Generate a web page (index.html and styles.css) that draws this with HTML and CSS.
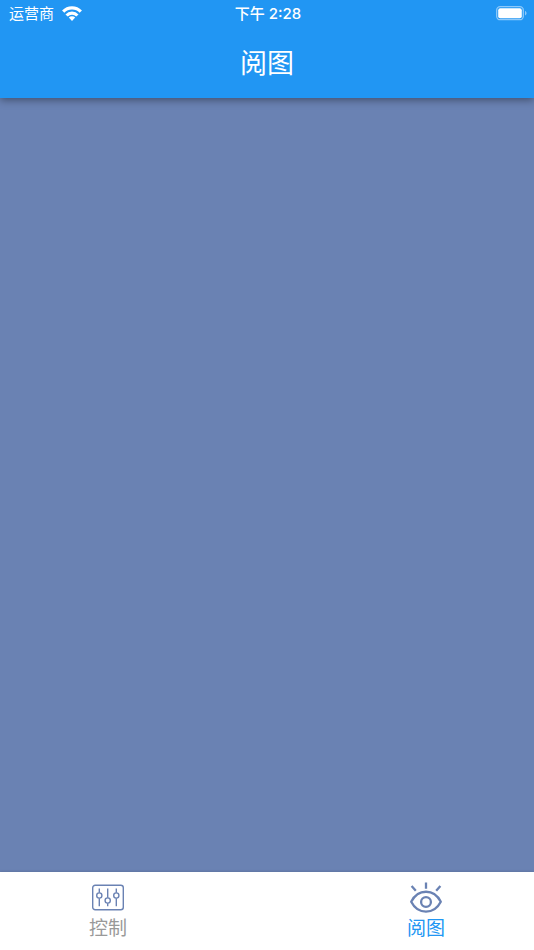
FILE: index.html
```html
<!DOCTYPE html>
<html lang="zh">
	<head>
		<meta charset="utf-8">
		<meta name="viewport" content="width=device-width, initial-scale=1">
		<title>阅图</title>
		<link rel="stylesheet" href="styles.css">
	</head>
	<body>
		<header class="header">
			<div class="status">
				<div class="carrier">
					<span>运营商</span>
					<svg class="wifi" width="20" height="18" viewBox="0 0 20 18" fill="none" stroke="#fff" stroke-width="3.2">
						<path d="M1.2 6.6A12.2 12.2 0 0 1 18.8 6.6"/>
						<path d="M4.6 10.5A7.4 7.4 0 0 1 15.4 10.5"/>
						<path d="M10 16L6.8 12.6A4.6 4.6 0 0 1 13.2 12.6Z" fill="#fff" stroke="none"/>
					</svg>
				</div>
				<div class="time">下午 2:28</div>
				<div class="power">
					<svg class="battery" width="31" height="16" viewBox="0 0 31 16">
						<rect x="0.7" y="0.7" width="26.6" height="13" rx="3.5" fill="none" stroke="#8dc9fa" stroke-width="1.3"/>
						<rect x="2.2" y="2.2" width="23.6" height="10" rx="2" fill="#fff"/>
						<path d="M29 5c2 .7 2 3.7 0 4.4z" fill="#8dc9fa"/>
					</svg>
				</div>
			</div>
			<h1 class="title">阅图</h1>
		</header>
		<main class="content"></main>
		<nav class="tabs">
			<button class="tab" type="button">
				<svg width="38" height="32" viewBox="0 0 38 32" fill="none" stroke="#6a82b3" stroke-width="1.4">
					<rect x="3.7" y="3.2" width="30.6" height="24.6" rx="2.5"/>
					<path d="M10.3 6.5v4.2M10.3 16.3v8M18.7 6.5v9.2M18.7 21.3v3M27.3 6.5v4.2M27.3 16.3v8"/>
					<circle cx="10.3" cy="13.5" r="2.6"/>
					<circle cx="18.7" cy="18.5" r="2.6"/>
					<circle cx="27.3" cy="13.5" r="2.6"/>
				</svg>
				<span>控制</span>
			</button>
			<button class="tab current" type="button">
				<svg width="38" height="32" viewBox="0 0 38 32" fill="none" stroke="#6a82b3" stroke-width="2.3">
					<path d="M4.2 19.8C11 6.4 27 6.4 33.8 19.8C27 33 11 33 4.2 19.8Z" stroke-linejoin="round"/>
					<circle cx="19" cy="20" r="4.9"/>
					<path d="M19 0.5v6.3M4.6 4l4.2 4.7M33.4 4L29.2 8.7"/>
				</svg>
				<span>阅图</span>
			</button>
		</nav>
	</body>
</html>
```
FILE: styles.css
```css
* {
  margin: 0;
  padding: 0;
  box-sizing: border-box;
}

body {
  display: flex;
  flex-direction: column;
  min-height: 100vh;
  background-color: #6a82b3;
  font-family: "Liberation Sans", "Noto Sans CJK SC", sans-serif;
}

.header {
  position: relative;
  padding-bottom: 14px;
  background-color: #2196f3;
  color: #fff;
  box-shadow: 0 2px 8px rgba(0, 0, 0, 0.4);
}

.status {
  display: grid;
  grid-template-columns: 1fr auto 1fr;
  align-items: center;
  height: 28px;
  padding: 0 7px 0 9px;
  font-size: 15px;
  line-height: 28px;
}

.carrier {
  display: flex;
  align-items: center;
  gap: 8px;
}

.time {
  font-family: Inter, "Noto Sans CJK SC", sans-serif;
  font-weight: 500;
}

.power {
  display: flex;
  justify-content: flex-end;
}

.title {
  padding-top: 16px;
  font-size: 27px;
  font-weight: 400;
  line-height: 40px;
  text-align: center;
}

.content {
  flex: 1;
}

.tabs {
  display: flex;
  justify-content: space-between;
  padding: 10px 89px 6px;
  background-color: #fff;
  box-shadow: 0 -1px 2px rgba(0, 0, 0, 0.1);
}

.tab {
  display: flex;
  flex-direction: column;
  align-items: center;
  border: 0;
  background: none;
  color: #999;
  font-family: inherit;
  font-size: 19px;
  line-height: 30px;
  cursor: pointer;
}

.tab.current {
  color: #2196f3;
}
```
